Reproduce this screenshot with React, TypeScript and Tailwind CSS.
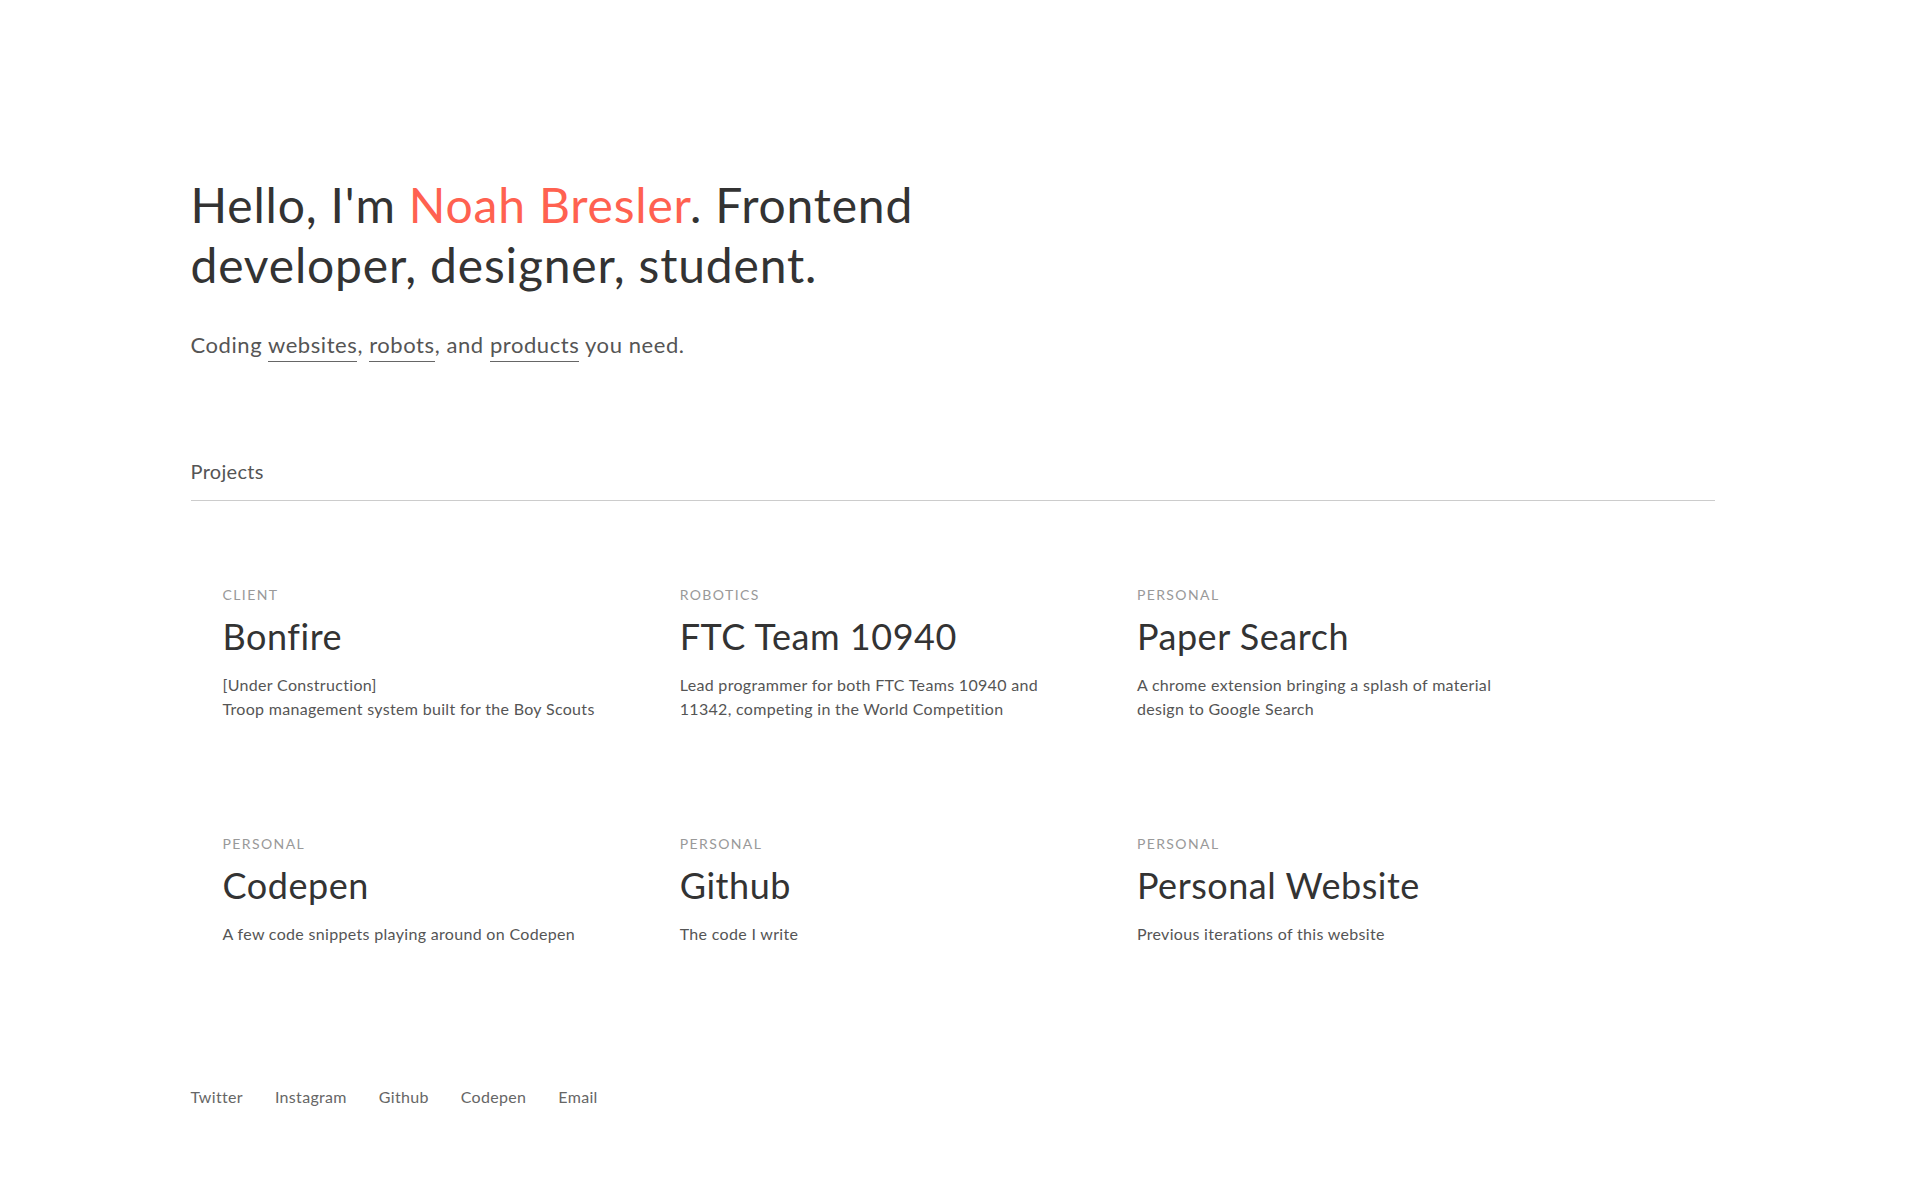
import React from "react";

const projects = [
  { tag: "CLIENT", title: "Bonfire", desc: ["[Under Construction]", "Troop management system built for the Boy Scouts"] },
  { tag: "ROBOTICS", title: "FTC Team 10940", desc: ["Lead programmer for both FTC Teams 10940 and", "11342, competing in the World Competition"] },
  { tag: "PERSONAL", title: "Paper Search", desc: ["A chrome extension bringing a splash of material", "design to Google Search"] },
  { tag: "PERSONAL", title: "Codepen", desc: ["A few code snippets playing around on Codepen"] },
  { tag: "PERSONAL", title: "Github", desc: ["The code I write"] },
  { tag: "PERSONAL", title: "Personal Website", desc: ["Previous iterations of this website"] },
];

export default function App() {
  return (
    <div className="min-h-screen bg-white font-['Lato','Open_Sans',sans-serif] tracking-[0.02em] text-[#333]">
      <div className="mx-auto w-[80%] pt-[175px] pb-[80px]">
        <h1 className="text-[48px] leading-[60px] font-normal tracking-[0.017em] text-[#333]">
          Hello, I'm <span className="text-[#ff6150]">Noah Bresler</span>. Frontend
          <br />
          developer, designer, student.
        </h1>
        <p className="mt-[33px] text-[22px] leading-[33px] tracking-[0.026em] text-[#555]">
          Coding <a className="border-b border-[#666] pb-[3px]">websites</a>,{" "}
          <a className="border-b border-[#666] pb-[3px]">robots</a>, and{" "}
          <a className="border-b border-[#666] pb-[3px]">products</a> you need.
        </p>
        <div className="mt-[95px] border-b border-[#cccccc] pb-[14px]">
          <h2 className="text-[20px] leading-[30px] font-normal text-[#555]">Projects</h2>
        </div>
        <div className="mt-[51px] grid grid-cols-[repeat(3,30%)] gap-y-[48px]">
          {projects.map((p) => (
            <div key={p.title} className="p-8">
              <div className="text-[14px] leading-[21px] tracking-[0.1em] text-[#999]">{p.tag}</div>
              <div className="mt-[11px] text-[36px] leading-[40px] tracking-[0.015em] text-[#333]">{p.title}</div>
              <div className="mt-[17px] text-[16px] leading-[24px] text-[#555]">
                {p.desc.map((d, i) => (
                  <div key={i}>{d}</div>
                ))}
              </div>
            </div>
          ))}
        </div>
        <footer className="mt-[107px] flex gap-8 text-[16px] leading-[24px] text-[#666]">
          <a>Twitter</a>
          <a>Instagram</a>
          <a>Github</a>
          <a>Codepen</a>
          <a>Email</a>
        </footer>
      </div>
    </div>
  );
}
